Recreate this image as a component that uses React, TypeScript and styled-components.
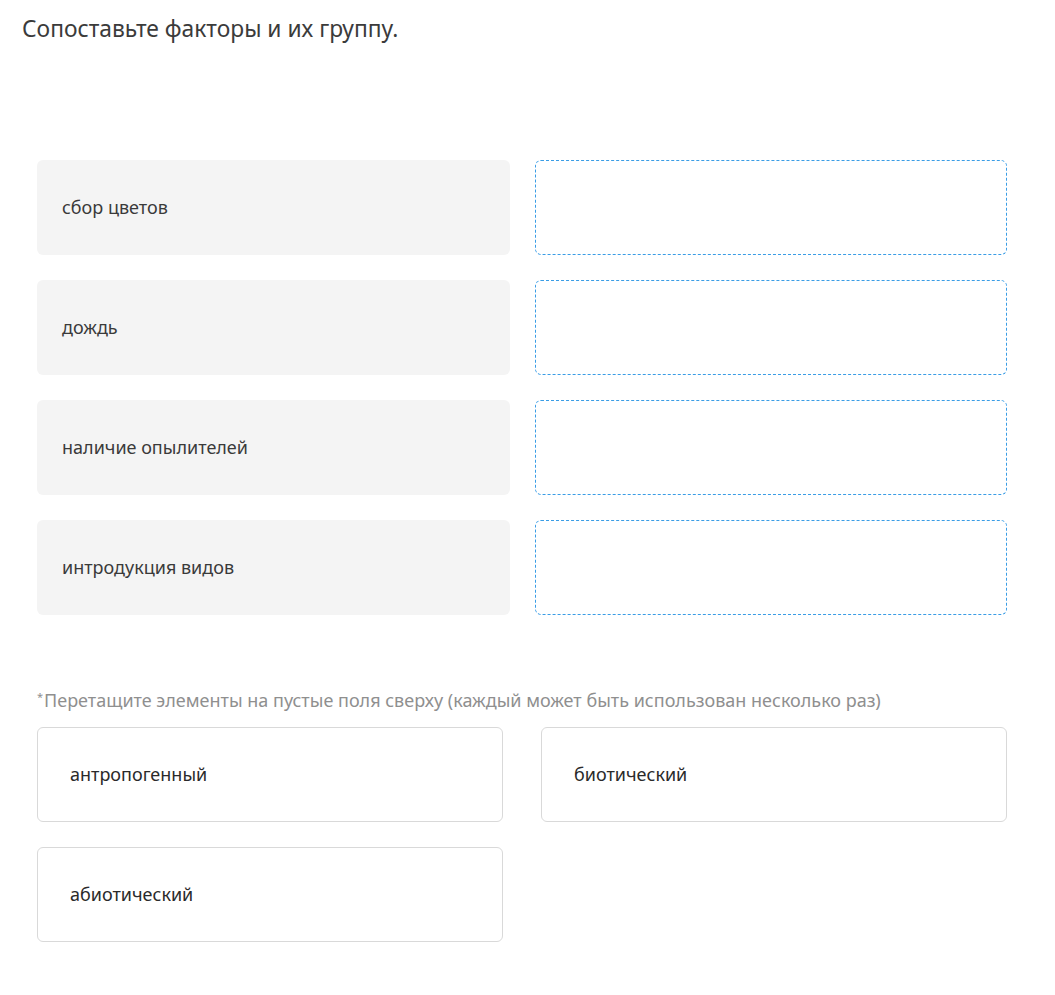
import React from 'react';
import styled, { createGlobalStyle } from 'styled-components';

const GlobalStyle = createGlobalStyle`
  body {
    margin: 0;
    background: #fff;
    font-family: "Noto Sans", "Open Sans", sans-serif;
  }
`;

const Page = styled.div`
  width: 1055px;
  padding: 14px 48px 40px 37px;
  box-sizing: border-box;
`;

const Title = styled.h2`
  margin: 0 0 0 -15px;
  font-size: 22.8px;
  font-weight: 400;
  line-height: 30px;
  color: #3b3b3b;
`;

const Pairs = styled.div`
  display: grid;
  grid-template-columns: 473px 472px;
  column-gap: 25px;
  row-gap: 25px;
  margin-top: 116px;
`;

const Factor = styled.div`
  height: 95px;
  box-sizing: border-box;
  display: flex;
  align-items: center;
  padding: 0 25px 2px;
  background: #f4f4f4;
  border-radius: 6px;
  font-size: 18px;
  color: #3a3a3a;
`;

const DropSlot = styled.div`
  height: 95px;
  box-sizing: border-box;
  border: 1px dashed #3a9de6;
  border-radius: 6px;
`;

const Hint = styled.p`
  margin: 70px 0 15px;
  font-size: 18px;
  line-height: 24px;
  color: #8f8f8f;

  sup {
    font-size: 11px;
    vertical-align: 6px;
    margin-right: 1px;
  }
`;

const Options = styled.div`
  display: grid;
  grid-template-columns: 466px 466px;
  column-gap: 38px;
  row-gap: 25px;
`;

const Option = styled.div`
  height: 95px;
  box-sizing: border-box;
  display: flex;
  align-items: center;
  padding: 0 32px 2px;
  border: 1px solid #d9d9d9;
  border-radius: 6px;
  background: #fff;
  font-size: 18px;
  color: #2a2a2a;
`;

const factors = ['сбор цветов', 'дождь', 'наличие опылителей', 'интродукция видов'];
const groups = ['антропогенный', 'биотический', 'абиотический'];

export default function App() {
  return (
    <Page>
      <GlobalStyle />
      <Title>Сопоставьте факторы и их группу.</Title>
      <Pairs>
        {factors.map(f => (
          <React.Fragment key={f}>
            <Factor>{f}</Factor>
            <DropSlot />
          </React.Fragment>
        ))}
      </Pairs>
      <Hint>
        <sup>*</sup>Перетащите элементы на пустые поля сверху (каждый может быть использован несколько раз)
      </Hint>
      <Options>
        {groups.map(g => (
          <Option key={g}>{g}</Option>
        ))}
      </Options>
    </Page>
  );
}
